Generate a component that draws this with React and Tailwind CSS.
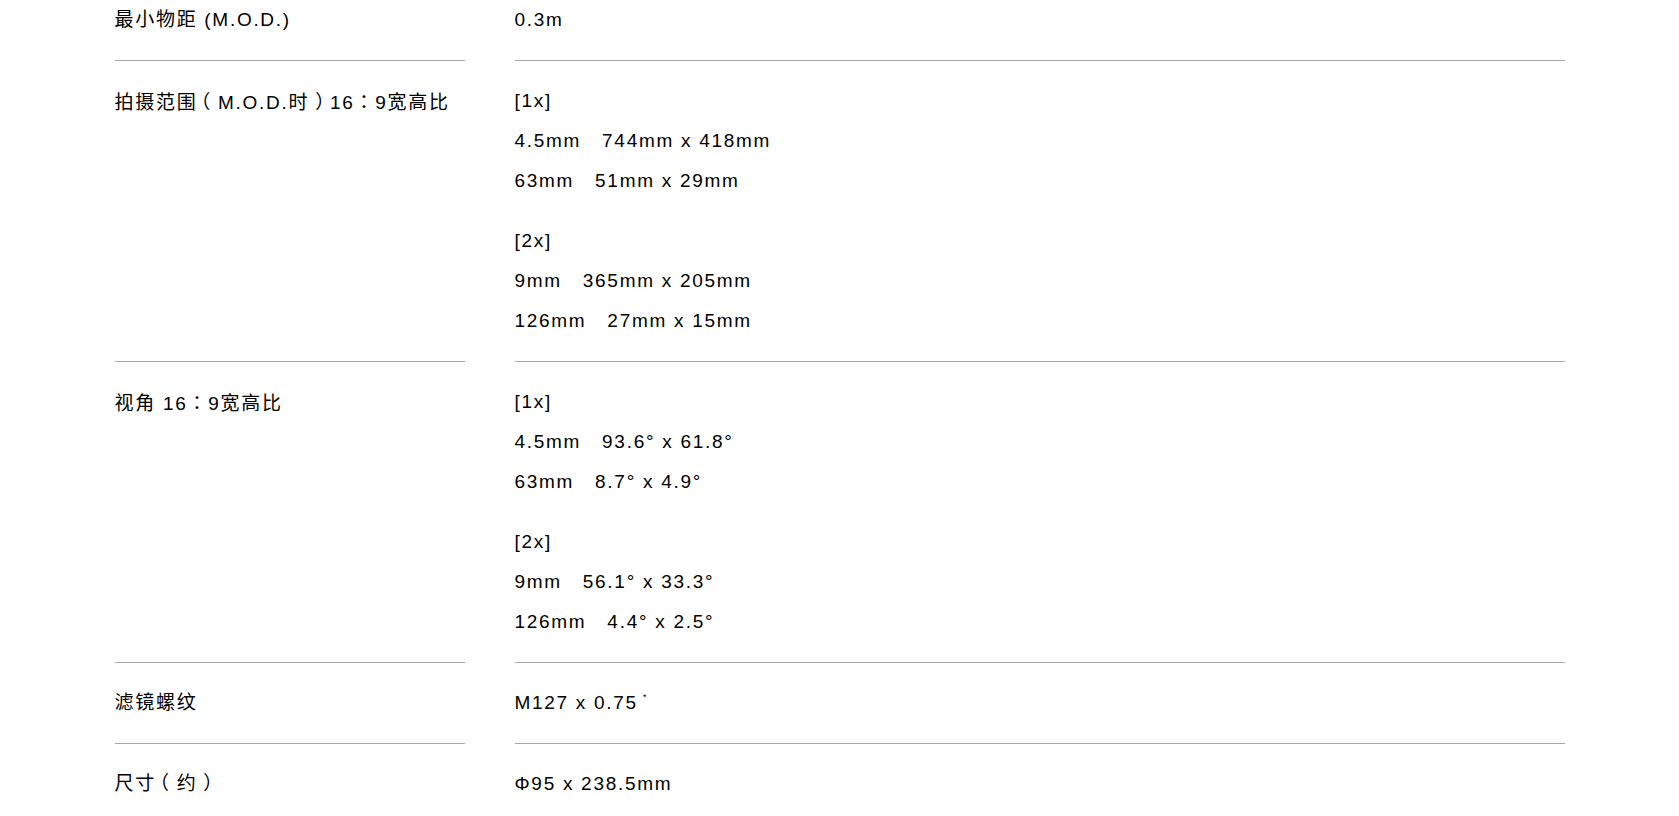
import React from "react";

const SPECS = [
  { label: "最小物距 (M.O.D.)", groups: [["0.3m"]] },
  {
    label: "拍摄范围（M.O.D.时）16：9宽高比",
    groups: [
      ["[1x]", "4.5mm   744mm x 418mm", "63mm   51mm x 29mm"],
      ["[2x]", "9mm   365mm x 205mm", "126mm   27mm x 15mm"],
    ],
  },
  {
    label: "视角 16：9宽高比",
    groups: [
      ["[1x]", "4.5mm   93.6° x 61.8°", "63mm   8.7° x 4.9°"],
      ["[2x]", "9mm   56.1° x 33.3°", "126mm   4.4° x 2.5°"],
    ],
  },
  { label: "滤镜螺纹", groups: [["M127 x 0.75"]], note: true },
  { label: "尺寸（约）", groups: [["Φ95 x 238.5mm"]] },
];

// the reference's CJK face puts full-width brackets on the outer side of their cell
const PUNCT = {
  "（": "relative -left-[6px]",
  "）": "relative left-[6px]",
  "：": "[font-family:'Noto_Sans_CJK_TC',sans-serif]",
};

function Label({ text }) {
  return text.split(/([（）：])/).map((part, i) =>
    PUNCT[part] ? (
      <span key={i} className={PUNCT[part]}>{part}</span>
    ) : (
      part
    )
  );
}

function SpecRow({ spec, first }) {
  const pad = first ? "pb-5" : "py-5";
  return (
    <div className="flex gap-[50px]">
      <div className={`w-[350px] shrink-0 border-b border-[#aaaaaa] ${pad}`}>
        <p className="leading-[40px]">
          <Label text={spec.label} />
        </p>
      </div>
      <div className={`flex-1 border-b border-[#aaaaaa] ${pad}`}>
        <div className="flex flex-col gap-5">
          {spec.groups.map((g, i) => (
            <div key={i}>
              {g.map((line, j) => (
                <p key={j} className="leading-[40px] whitespace-pre">
                  {line}
                  {spec.note && (
                    <span className="relative -top-[9px] ml-[5px] text-[9px] leading-none">*</span>
                  )}
                </p>
              ))}
            </div>
          ))}
        </div>
      </div>
    </div>
  );
}

export default function App() {
  return (
    <div
      className="min-h-screen bg-white text-[19px] tracking-[0.09em] text-black"
      style={{ fontFamily: '"Liberation Sans", Arial, "Noto Sans CJK SC", sans-serif' }}
    >
      <div className="mx-auto w-[1450px]">
        {SPECS.map((s, i) => (
          <SpecRow key={i} spec={s} first={i === 0} />
        ))}
      </div>
    </div>
  );
}
